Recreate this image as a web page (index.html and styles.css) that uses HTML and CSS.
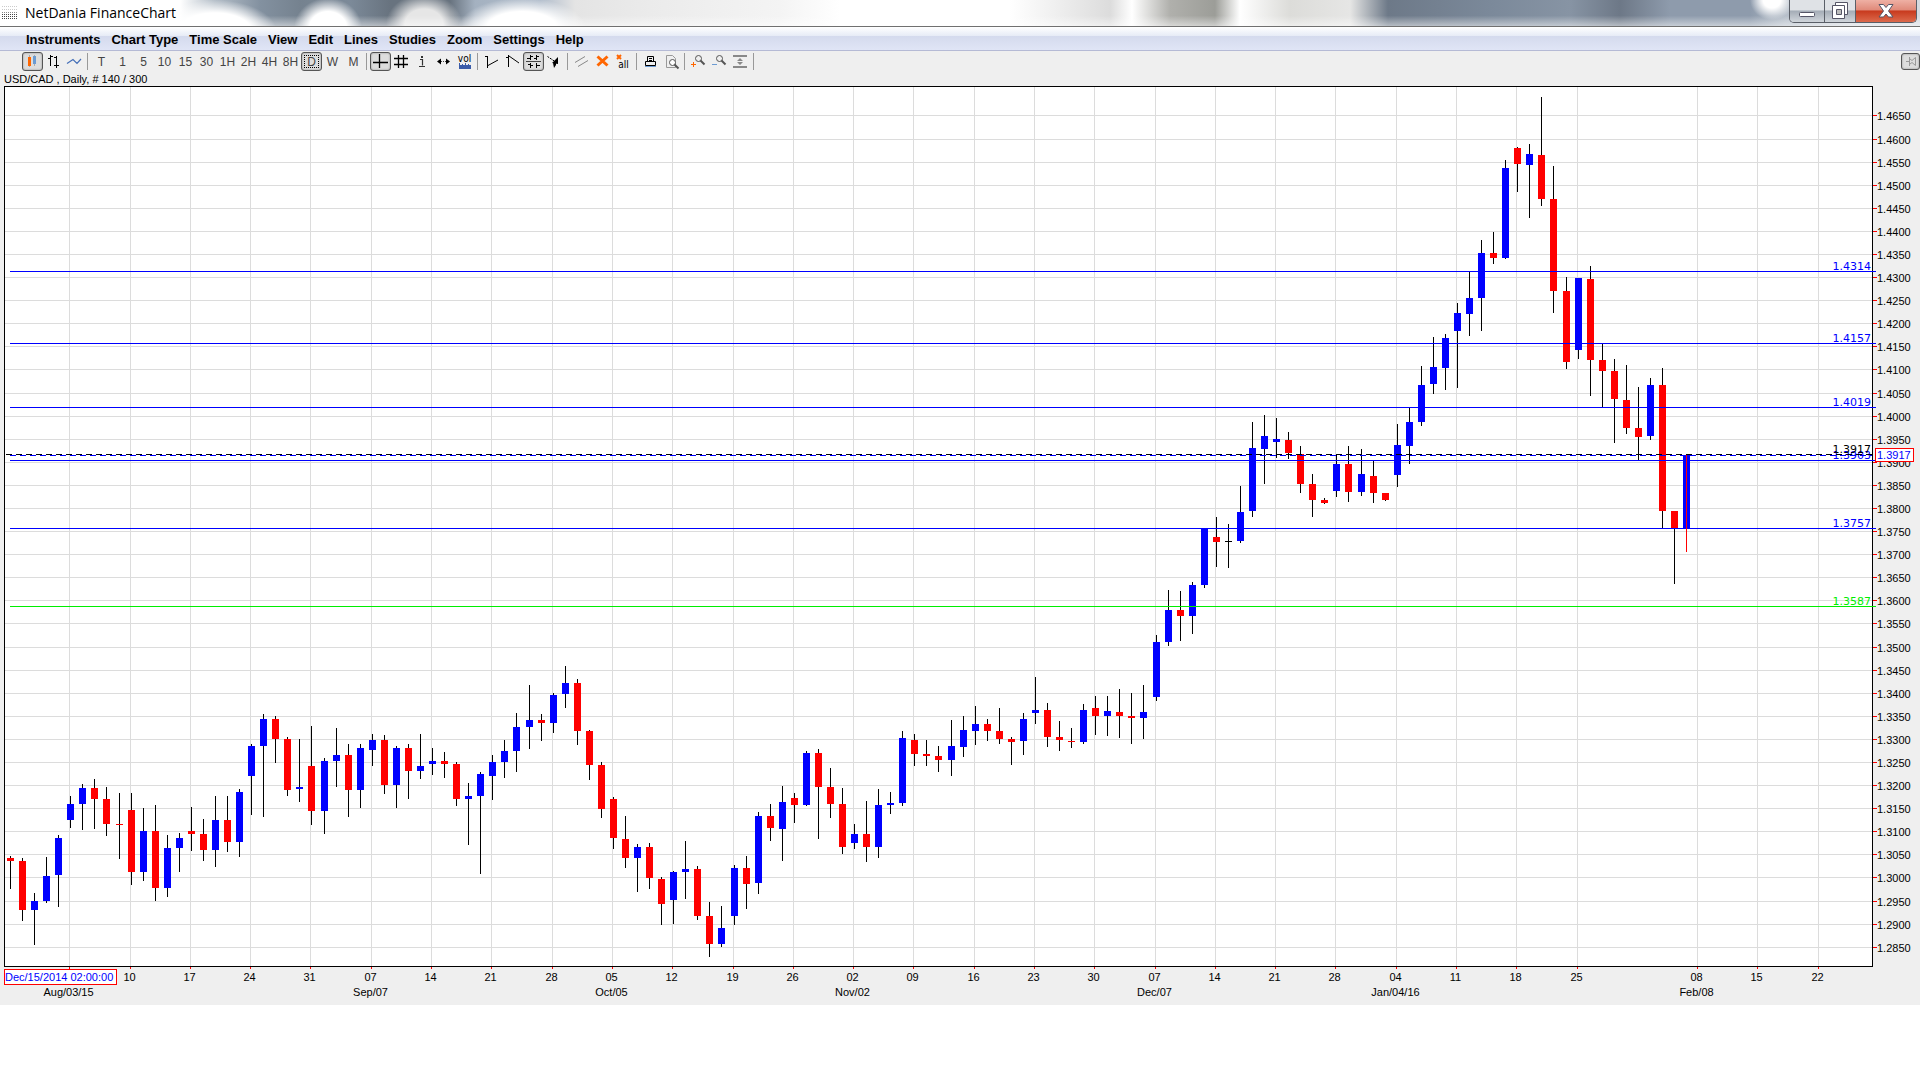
FILE: index.html
```html
<!DOCTYPE html>
<html lang="en">
<head>
  <meta charset="UTF-8">
  <title>NetDania FinanceChart</title>
  <link rel="stylesheet" href="styles.css">
</head>
<body>

  <header class="titlebar">
    <svg class="app-icon" width="16" height="16" viewBox="0 0 16 16">
      <path d="M0 1.5H16M0 4.5H16" stroke="#ccc" stroke-dasharray="1 1"/>
      <path d="M0 7.5H16" stroke="#888" stroke-dasharray="1 1"/>
      <path d="M0 9.5H16M0 11.5H16M0 13.5H16" stroke="#444" stroke-dasharray="1 1"/>
    </svg>
    <h1>NetDania FinanceChart</h1>
    <div class="window-buttons">
      <button class="min" aria-label="Minimize">
        <svg width="18" height="18" viewBox="0 0 18 18"><rect x="1.5" y="10.5" width="15" height="4" rx="1" fill="#fff" stroke="#556"/></svg>
      </button>
      <button class="max" aria-label="Restore">
        <svg width="18" height="18" viewBox="0 0 18 18"><path d="M4.5.5h12v12h-12z" fill="#fff" stroke="#556"/><path d="M1.5 3.5h12v13h-12z" fill="#fff" stroke="#556"/><path d="M5.5 7.5h5v5h-5z" fill="#bbb" stroke="#556"/></svg>
      </button>
      <button class="close" aria-label="Close">
        <svg width="18" height="18" viewBox="0 0 18 18"><path d="M2 2.500h4.500l2.500 3 2.500-3H16L11.500 9l4.500 6h-4.500L9 12l-2.500 3H2l4.500-6z" fill="#fff" stroke="#556"/></svg>
      </button>
    </div>
  </header>

  <nav class="menubar">
    <button>Instruments</button>
    <button>Chart Type</button>
    <button>Time Scale</button>
    <button>View</button>
    <button>Edit</button>
    <button>Lines</button>
    <button>Studies</button>
    <button>Zoom</button>
    <button>Settings</button>
    <button>Help</button>
  </nav>

  <div class="toolbar">
    <button class="on" aria-label="Candlestick"><svg viewBox="0 0 17 17"><path d="M5.500 2v12M10.500 2v11" stroke="#aaa"/><path d="M4 4h3v9H4z" fill="#f60"/><path d="M9 3h3v8H9z" fill="#6c9bd2"/></svg></button>
    <button aria-label="Bars"><svg viewBox="0 0 17 17"><path d="M5.500 2v11M3 5.500h2M5 3.500h3M11.500 3v12M9 4.500h2M9 12.500h5" stroke="#000"/></svg></button>
    <button aria-label="Line"><svg viewBox="0 0 17 17"><path d="M1 10.500l3-2 3-2 4 4 4-4.500" fill="none" stroke="#4670b8" stroke-width="1.200"/></svg></button>
    <span class="sep"></span>
    <button>T</button>
    <button>1</button>
    <button>5</button>
    <button>10</button>
    <button>15</button>
    <button>30</button>
    <button>1H</button>
    <button>2H</button>
    <button>4H</button>
    <button>8H</button>
    <button class="on day">D</button>
    <button>W</button>
    <button>M</button>
    <span class="sep"></span>
    <button class="on" aria-label="Crosshair"><svg viewBox="0 0 17 17"><path d="M7.500 1v14M1 9.500h15" stroke="#000" stroke-width="1.300"/></svg></button>
    <button aria-label="Grid"><svg viewBox="0 0 17 17"><path d="M5.500 2v13M10.500 2v13M1 5.500h14M1 11.500h14" stroke="#000" stroke-width="1.300"/></svg></button>
    <button aria-label="Info"><svg viewBox="0 0 17 17"><path d="M7 3h2v2H7z" fill="#333"/><path d="M6 6.500h2.500v6M5 13.500h6" fill="none" stroke="#333" stroke-width="1.200"/></svg></button>
    <button aria-label="Spread"><svg viewBox="0 0 17 17"><path d="M2 8.500l4-3v6zM15 8.500l-4-3v6z" fill="#000"/><path d="M6 8.500h5" stroke="#444" stroke-dasharray="1 1"/></svg></button>
    <button class="vol" aria-label="Volume"><span>vol</span><svg viewBox="0 0 12 6"><path d="M0 6V0h1v2h2V1h1v1h2V0h1v2h2V1h1v1h2v4z" fill="#3b5ba8"/></svg></button>
    <span class="sep"></span>
    <button aria-label="Trend up"><svg viewBox="0 0 17 17"><path d="M2 3.500h3M4.500 3v12M5 12.500l10-5.500" fill="none" stroke="#000"/></svg></button>
    <button aria-label="Trend down"><svg viewBox="0 0 17 17"><path d="M2 4.500h3M4.500 2v12M5 3l10 7" fill="none" stroke="#000"/></svg></button>
    <button class="on" aria-label="Snap"><svg viewBox="0 0 17 17"><path d="M1 8.500h15" stroke="#444"/><path d="M5.500 2v5M5.500 10v5M11.500 2v5M11.500 10v5M2 5.500h3M6 3.500h2M9 5.500h2M12 3.500h2M3 11.500h2M6 12.500h2M12 12.500h3" stroke="#000"/></svg></button>
    <button aria-label="Pointer"><svg viewBox="0 0 17 17"><path d="M1.500 3.500l9 6" stroke="#000" stroke-dasharray="2 1"/><path d="M12 4v7l-6-1zM7 10h3v2l-2 3z" fill="#000"/></svg></button>
    <span class="sep"></span>
    <button aria-label="Parallel"><svg viewBox="0 0 17 17"><path d="M2 9.500L12 3.500M5 13.500L15 7.500" stroke="#888"/></svg></button>
    <button aria-label="Delete"><svg viewBox="0 0 17 17"><path d="M3.500 3.500l10 9M13.500 3.500l-10 9" stroke="#f60" stroke-width="3"/></svg></button>
    <button class="del-all" aria-label="Delete all"><svg viewBox="0 0 6 6"><path d="M1 1l4 4M5 1l-4 4" stroke="#f60" stroke-width="2"/></svg><span>all</span></button>
    <span class="sep"></span>
    <button aria-label="Print"><svg viewBox="0 0 17 17"><path d="M5.500 8V3.500h6V8M3.500 8.500h10v4h-10zM7 5.500h3M7 7.500h3" fill="none" stroke="#000"/><path d="M3 13.500h11" stroke="#6c9bd2"/></svg></button>
    <button aria-label="Preview"><svg viewBox="0 0 17 17"><path d="M3.500 2.500h6l3 3v9h-9z" fill="none" stroke="#999"/><circle cx="9.500" cy="9.500" r="3" fill="#fff" stroke="#555"/><path d="M11.500 11.500l4 4" stroke="#555" stroke-width="2"/></svg></button>
    <span class="sep"></span>
    <button aria-label="Zoom in"><svg viewBox="0 0 17 17"><circle cx="8.500" cy="5.500" r="3" fill="none" stroke="#555"/><path d="M10.500 7.500l4 4" stroke="#555" stroke-width="2"/><path d="M1 11.500h5M3.500 9v5" stroke="#f60"/></svg></button>
    <button aria-label="Zoom out"><svg viewBox="0 0 17 17"><circle cx="8.500" cy="5.500" r="3" fill="none" stroke="#555"/><path d="M10.500 7.500l4 4" stroke="#555" stroke-width="2"/><path d="M1 11.500h5" stroke="#6c9bd2"/></svg></button>
    <button aria-label="Fit"><svg viewBox="0 0 17 17"><path d="M1 3h14M1 14h14" stroke="#888" stroke-width="2"/><path d="M8 5l3 3H5zM8 12l3-3H5z" fill="#888"/></svg></button>
    <span class="sep"></span>
    <button class="on pin" aria-label="Pin"><svg viewBox="0 0 17 17"><path d="M4 8.500h3M7.500 4v9M8 6l2 1.500 3.500-3v8l-3.500-3L8 11" fill="none" stroke="#999"/></svg></button>
  </div>

  <main class="chart">
    <p class="info">USD/CAD , Daily, # 140 / 300</p>
    <svg id="plot"></svg>
  </main>

  <script src="chart.js"></script>
</body>
</html>
```

FILE: styles.css
```css
body {
  margin: 0;
  background: #fff;
  font-family: "Liberation Sans", Arial, sans-serif;
  color: #000;
}

button {
  border: none;
  background: none;
  padding: 0;
  margin: 0;
  font-family: inherit;
  color: inherit;
}

/* title bar */
.titlebar {
  display: flex;
  align-items: center;
  box-sizing: border-box;
  height: 27px;
  padding-left: 2px;
  padding-right: 3px;
  border-bottom: 1px solid #707070;
  background:
    linear-gradient(to bottom, transparent 60%, rgba(255, 255, 255, 0.5)),
    radial-gradient(ellipse 62px 32px at 215px 32px, #fff 60%, transparent),
    radial-gradient(ellipse 34px 30px at 328px 28px, #fff 55%, transparent),
    radial-gradient(ellipse 38px 30px at 424px 24px, #e6e6e6 50%, transparent),
    radial-gradient(ellipse 64px 30px at 522px 28px, #fff 55%, transparent),
    radial-gradient(ellipse 22px 20px at 1772px 0, #fff 40%, transparent),
    linear-gradient(to right, #fff 180px, #b4bec8 215px, #8391a0 260px, #75828f 300px, #7c8a99 350px, #68737f 390px, #68737f 450px, #a4b1c0 475px, #b0bccb 540px, #e4e4e4 575px, #ebebeb 650px, #f4f4f4 780px, #fff 840px, #fff 1010px, #dcdcdc 1110px, #fff 1132px, #b0b0ac 1170px, #9c9d98 1215px, #fff 1240px, #dcdcd9 1290px, #e6e6e5 1350px, #6d7988 1388px, #7b899a 1490px, #8794a4 1570px, #6d7887 1620px, #8e9bac 1670px, #8e9bac 1750px, #b5bec9 1785px, #d5dae0 1850px, #d5dae0);
}

.titlebar h1 {
  flex: 1;
  margin: 0 0 0 7px;
  font: 14px/20px "Open Sans", sans-serif;
}

.window-buttons {
  display: flex;
  align-self: flex-start;
  height: 22px;
  border: 1px solid #5a5f68;
  border-top: none;
  border-radius: 0 0 5px 5px;
  overflow: hidden;
}

.window-buttons button {
  display: flex;
  align-items: center;
  justify-content: center;
  width: 34px;
  background: linear-gradient(#dfe2e6 45%, #a4acb6 50%, #d0d5db);
}

.window-buttons .max {
  width: 32px;
  border-left: 1px solid #5a5f68;
  border-right: 1px solid #5a5f68;
}

.window-buttons .close {
  width: 60px;
  background: linear-gradient(#eeb0a4, #e08a7a 45%, #c83a1e 50%, #dc6a4c);
}

/* menu */
.menubar {
  display: flex;
  gap: 11px;
  box-sizing: border-box;
  height: 24px;
  padding-top: 2px;
  padding-left: 26px;
  border-bottom: 1px solid #b5bad5;
  background: linear-gradient(#fff, #e6ebf6 9px, #d4daed 9px, #e0e5f6);
}

.menubar button {
  font-size: 13px;
  font-weight: bold;
}

/* toolbar */
.toolbar {
  display: flex;
  align-items: center;
  height: 21px;
  padding-left: 22px;
  background: #efefef;
}

.toolbar button {
  display: flex;
  align-items: center;
  justify-content: center;
  box-sizing: border-box;
  width: 21px;
  height: 19px;
  font-family: "Liberation Sans Narrow", "Liberation Sans", sans-serif;
  font-size: 12px;
  color: #444;
}

.toolbar svg {
  width: 17px;
  height: 17px;
  flex: none;
}

.toolbar .on {
  border: 1px solid #555;
  border-radius: 3px;
  background: #ddd;
  box-shadow: inset 0 0 2px #888;
}

.toolbar .day {
  outline: 1px dotted #000;
  outline-offset: -4px;
}

.toolbar .vol,
.toolbar .del-all {
  flex-direction: column;
  font: 10px/9px "DejaVu Sans Condensed", sans-serif;
  color: #000;
}

.toolbar .vol svg {
  width: 12px;
  height: 6px;
}

.toolbar .del-all svg {
  width: 6px;
  height: 6px;
  margin-right: 9px;
}

.toolbar .pin {
  width: 19px;
  height: 17px;
  margin-left: auto;
}

.sep {
  width: 1px;
  height: 17px;
  margin: 0 3px 0 2px;
  background: #999;
}

/* chart */
.chart {
  background: #efefef;
}

.info {
  margin: 0;
  padding-left: 4px;
  font-size: 11px;
  line-height: 14px;
}

#plot {
  display: block;
  width: 100%;
  font-size: 11px;
  shape-rendering: crispEdges;
}

#plot .area {
  fill: #fff;
  stroke: #000;
}

#plot .grid {
  stroke: #dcdcdc;
}

#plot .tick {
  stroke: #f00;
}

#plot .wick {
  stroke: #000;
}

#plot .date {
  text-anchor: middle;
}

#plot .level {
  font-family: "DejaVu Sans", sans-serif;
  text-anchor: end;
}

#plot .tag {
  fill: #fff;
  stroke: #f00;
}

#plot .tag-text {
  fill: #00f;
}
```

FILE: chart.js
```javascript
const svg = document.getElementById("plot");

// candles: colour, then high / body top / body bottom / low rows
const candles = `
R 856 858 861 889,R 858 861 910 921,B 893 901 910 945,B 857 876 901 903,B 835 838 875 907,
B 796 804 820 828,B 784 788 804 830,R 779 788 799 829,R 787 799 824 836,R 793 824 825 859,
R 793 810 872 885,B 808 831 872 881,R 805 831 888 901,B 835 848 888 897,B 833 838 848 872,
R 807 831 834 851,R 819 834 850 861,B 796 820 850 867,R 796 820 842 852,B 789 792 842 857,
B 744 746 776 815,B 714 719 746 817,R 716 719 739 763,R 737 739 790 796,B 739 787 789 802,
R 726 766 811 825,B 758 761 811 834,B 728 755 761 787,R 744 755 790 817,B 744 748 790 808,
B 734 740 750 766,R 735 740 785 794,B 746 748 785 808,R 744 748 771 799,B 734 766 771 779,
B 748 761 764 775,R 752 761 764 778,R 762 764 799 806,B 783 796 799 845,B 772 774 796 874,
B 755 762 776 800,B 740 751 762 778,B 713 727 751 772,B 685 720 727 749,R 714 720 723 741,
B 693 695 723 733,B 666 683 694 708,R 679 683 731 745,R 730 731 765 780,R 762 765 809 818,
R 797 799 838 849,R 816 839 858 868,B 844 847 858 892,R 843 847 878 889,R 877 879 904 925,
B 871 872 900 924,B 841 869 872 899,R 866 869 916 920,R 902 916 944 957,B 906 928 944 947,
B 865 868 916 925,R 856 868 884 909,B 812 816 883 894,R 804 816 828 841,B 786 802 829 861,
R 793 798 805 823,B 751 753 805 806,R 749 753 787 839,R 768 787 804 818,R 788 804 847 854,
B 824 834 843 849,R 801 834 847 862,B 789 805 847 858,B 792 803 805 814,B 731 738 803 806,
R 734 740 754 766,R 740 754 756 766,R 746 756 760 772,B 720 746 760 776,B 716 730 747 757,
B 706 724 731 745,R 719 724 731 741,R 708 731 739 744,R 737 739 742 765,B 713 719 741 755,
B 677 710 713 724,R 703 710 737 747,R 721 737 740 751,R 728 741 742 748,B 704 710 742 744,
R 696 708 716 735,B 696 711 716 736,R 689 712 716 738,R 693 716 718 744,B 685 712 718 739,
B 635 642 697 701,B 590 610 642 646,R 591 610 616 641,B 582 585 616 634,B 528 529 585 588,
R 517 537 542 567,K 524 541 542 568,B 486 512 541 543,B 422 448 511 517,B 415 436 449 484,
B 418 439 442 458,R 432 440 453 459,R 446 454 484 493,R 474 484 500 517,R 498 500 503 504,
B 454 464 491 497,R 446 464 492 502,B 449 474 492 496,R 460 476 493 503,R 493 493 500 501,
B 424 445 475 487,B 408 422 446 464,B 366 385 422 426,B 337 367 384 394,B 334 338 368 390,
B 303 313 331 388,B 272 298 314 336,B 240 253 298 331,R 232 253 258 264,B 160 168 258 259,
R 147 148 164 192,B 144 154 165 218,R 97 155 199 206,R 166 199 291 313,R 277 291 362 369,
B 278 278 350 359,R 266 279 360 396,R 344 360 371 407,R 359 371 399 443,R 365 400 428 434,
R 387 428 437 460,B 378 385 436 440,R 368 385 511 528,R 511 511 528 584,B 455 455 528 528
`.trim().split(",").map(c => c.trim().split(" "));

const colors = { R: "#f00", B: "#00f", K: "#000" };
const weeks = ["", "10", "17", "24", "31", "07", "14", "21", "28", "05", "12", "19", "26",
  "02", "09", "16", "23", "30", "07", "14", "21", "28", "04", "11", "18", "25", null, "08", "15", "22"];
const months = { 0: "Aug/03/15", 5: "Sep/07", 9: "Oct/05", 13: "Nov/02", 18: "Dec/07", 22: "Jan/04/16", 27: "Feb/08" };
const levels = [[1.4314, "#00f"], [1.4157, "#00f"], [1.4019, "#00f"], [1.3903, "#00f"], [1.3757, "#00f"], [1.3587, "#0e0"]];

const TOP = 86;         // row of the plot's upper edge
const HEIGHT = 880;
const AXIS = 48;        // room for the prices on the right

function priceY(price) {
  return Math.floor(115.96 + (1.465 - price) / 0.005 * 23.0909) - TOP;
}

function line(x1, y1, x2, y2, attrs) {
  return `<path d="M${x1} ${y1}L${x2} ${y2}" ${attrs}/>`;
}

function rect(x, y, w, h, attrs) {
  return `<rect x="${x}" y="${y}" width="${w}" height="${h}" ${attrs}/>`;
}

function text(x, y, str, attrs = "") {
  return `<text x="${x}" y="${y}" ${attrs}>${str}</text>`;
}

function draw() {
  const right = svg.clientWidth - AXIS;
  const step = (right - 63.3) / 150;
  const candleX = i => Math.floor(10.53 + step * i);
  let out = rect(4.5, 0.5, right - 4, HEIGHT, 'class="area"');

  // grid, ticks and axis labels
  for (let i = 0; i <= 36; i++) {
    const price = 1.465 - i * 0.005;
    const y = priceY(price) + 0.5;
    out += line(5, y, right, y, 'class="grid"');
    out += line(right + 1, y, right + 5, y, 'class="tick"');
    out += text(right + 5, y + 4.5, price.toFixed(4));
  }
  weeks.forEach((day, i) => {
    if (day === null) return;
    const x = candleX(5 + i * 5) - 0.5;
    out += line(x, 1, x, HEIGHT, 'class="grid"');
    out += line(x, HEIGHT + 1, x, HEIGHT + 3, 'class="tick"');
    out += text(x - 1, HEIGHT + 15, day, 'class="date"');
    if (months[i]) out += text(x - 1, HEIGHT + 30, months[i], 'class="date"');
  });

  candles.forEach(([color, high, top, bottom, low], i) => {
    const x = candleX(i);
    out += line(x + 0.5, high - TOP, x + 0.5, low - TOP, 'class="wick"');
    out += rect(x - 3, top - TOP, 7, bottom - top, `fill="${colors[color]}"`);
  });

  levels.forEach(([price, color]) => {
    const y = priceY(price);
    out += line(10, y + 0.5, right + 4, y + 0.5, `stroke="${color}"`);
    out += text(right - 1, y - 1, price.toFixed(4), `class="level" fill="${color}"`);
  });

  // last price
  const last = priceY(1.3917);
  const x = candleX(139) + 0.5;
  out += line(x, last + 1, x, 552 - TOP, 'stroke="#f00"');
  out += line(6, last + 0.5, right, last + 0.5, 'stroke="#000" stroke-dasharray="6 4"');
  out += line(10, last + 1.5, right, last + 1.5, 'stroke="#00f" stroke-dasharray="6 4"');
  out += text(right - 1, last - 1, "1.3917", 'class="level"');
  out += rect(right + 3.5, last - 5.5, 38, 13, 'class="tag"');
  out += text(right + 5, last + 5, "1.3917", 'class="tag-text"');

  // first loaded bar
  out += rect(4.5, HEIGHT + 3.5, 112, 15, 'class="tag"');
  out += text(5, HEIGHT + 15, "Dec/15/2014 02:00:00", 'class="tag-text"');

  svg.style.height = HEIGHT + 39 + "px";
  svg.innerHTML = out;
}

draw();
window.addEventListener("resize", draw);
```
